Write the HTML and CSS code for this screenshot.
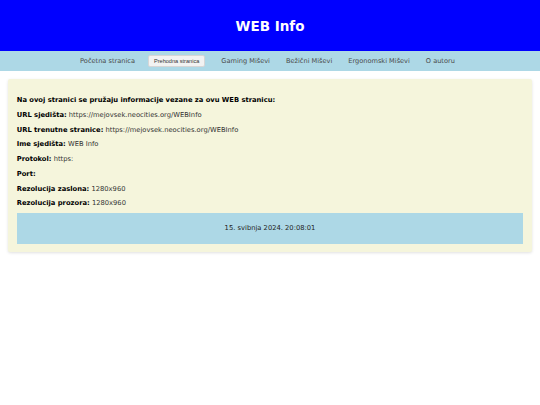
FILE: index.html
```html
<!DOCTYPE html>
<html lang="hr">
<head>
<meta charset="utf-8">
<title>WEB Info</title>
<link rel="stylesheet" href="styles.css">
</head>
<body>
<header class="site-header">
  <h1 class="site-title">WEB Info</h1>
</header>
<nav class="site-nav">
  <ul class="nav-list">
    <li><a class="nav-link" href="#">Početna stranica</a></li>
    <li><button class="nav-button" type="button">Prehodna stranica</button></li>
    <li><a class="nav-link" href="#">Gaming Miševi</a></li>
    <li><a class="nav-link" href="#">Bežični Miševi</a></li>
    <li><a class="nav-link" href="#">Ergonomski Miševi</a></li>
    <li><a class="nav-link" href="#">O autoru</a></li>
  </ul>
</nav>
<main class="info-card">
  <p class="info-line"><strong>Na ovoj stranici se pružaju informacije vezane za ovu WEB stranicu:</strong></p>
  <p class="info-line"><strong>URL sjedišta:</strong> https://mejovsek.neocities.org/WEBInfo</p>
  <p class="info-line"><strong>URL trenutne stranice:</strong> https://mejovsek.neocities.org/WEBInfo</p>
  <p class="info-line"><strong>Ime sjedišta:</strong> WEB Info</p>
  <p class="info-line"><strong>Protokol:</strong> https:</p>
  <p class="info-line"><strong>Port:</strong> </p>
  <p class="info-line"><strong>Rezolucija zaslona:</strong> 1280x960</p>
  <p class="info-line info-line-last"><strong>Rezolucija prozora:</strong> 1280x960</p>
  <div class="date-box">15. svibnja 2024. 20:08:01</div>
</main>
</body>
</html>
```

FILE: styles.css
```css
html, body {
  margin: 0;
  padding: 0;
  background: #ffffff;
}

body {
  font-family: "DejaVu Sans", Verdana, sans-serif;
  font-size: 6.75px;
  color: #333333;
}

.site-header {
  background: #0000ff;
  padding: 19px 0 16.3px;
  text-align: center;
}

.site-title {
  margin: 0;
  color: #ffffff;
  font-size: 13.5px;
  font-weight: bold;
  line-height: 15.7px;
}

.site-nav {
  background: #add8e6;
  padding: 4px 0;
}

.nav-list {
  list-style: none;
  margin: 0;
  padding: 0 5px 0 0;
  display: flex;
  justify-content: center;
  align-items: center;
  gap: 16px;
  height: 12px;
}

.nav-link {
  color: #4a4a4a;
  font-size: 6.6px;
  text-decoration: none;
  line-height: 12px;
}

.nav-button {
  font-family: "Liberation Sans", Arial, sans-serif;
  font-size: 5.6px;
  color: #333333;
  background: #f2f2f2;
  border: 0.5px solid #d6d6d6;
  border-radius: 2px;
  padding: 2px 5px;
  line-height: 6.4px;
  margin: 0 0 0 -3px;
}

.info-card {
  display: block;
  margin: 8.4px;
  padding: 10px 8.4px 8.8px;
  background: #f5f5dc;
  border-radius: 2px;
  box-shadow: 0 1px 3px rgba(0, 0, 0, 0.12);
}

.info-line {
  margin: 6.75px 0;
  line-height: 8px;
}

.info-line-last {
  margin-bottom: 6px;
}

.info-line strong {
  color: #000000;
}

.date-box {
  background: #add8e6;
  text-align: center;
  padding: 11.2px 0;
  line-height: 7.9px;
  color: #222222;
}
```
